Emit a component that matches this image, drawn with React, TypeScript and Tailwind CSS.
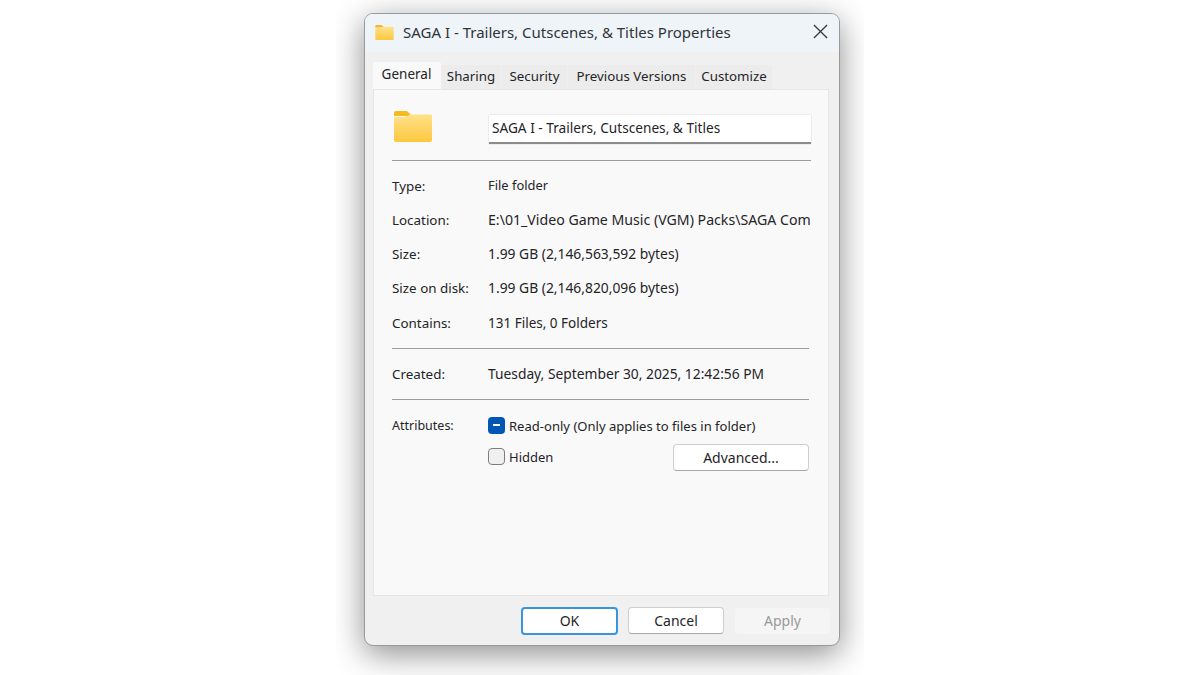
const rows = [
  ['Type:', 'File folder', 'text-[12.900px]'],
  ['Location:', 'E:\\01_Video Game Music (VGM) Packs\\SAGA Complete Soundtrack', 'text-[14.150px]'],
  ['Size:', '1.99 GB (2,146,563,592 bytes)', 'text-[13.850px]'],
  ['Size on disk:', '1.99 GB (2,146,820,096 bytes)', 'text-[13.850px]'],
  ['Contains:', '131 Files, 0 Folders', 'text-[13.500px]'],
];

const tabs = [
  ['Sharing', 'w-[61px]'],
  ['Security', 'w-[66px]'],
  ['Previous Versions', 'w-[128px]'],
  ['Customize', 'w-[77px]'],
];

function FolderIcon({ className }: { className: string }) {
  return (
    <svg className={className} viewBox="0 0 38 31" fill="none">
      <defs>
        <linearGradient id="folderFill" x1="0" y1="0" x2="0" y2="1">
          <stop offset="0" stopColor="#ffe28a" />
          <stop offset="1" stopColor="#fcc83f" />
        </linearGradient>
      </defs>
      <path d="M0 2a2 2 0 0 1 2-2h10a3 3 0 0 1 2 1l4 4H0z" fill="#f8b81f" />
      <path d="M0 7a1 1 0 0 1 1-1h10l5-2.500h20.500a1.500 1.500 0 0 1 1.500 1.500V29a2 2 0 0 1-2 2H2a2 2 0 0 1-2-2z" fill="url(#folderFill)" />
    </svg>
  );
}

export default function App() {
  return (
    <div className="h-[675px] w-[1200px] bg-white font-['Noto_Sans',sans-serif] text-[14px] text-[#1f2428]">
      <div className="mx-auto h-[675px] w-[528px] overflow-hidden pl-[28px] pt-[13px]">
        <div className="flex h-[633px] w-[476px] flex-col overflow-hidden rounded-[9px] border border-[#999999] bg-[#f0f0f0] shadow-[0_8px_32px_rgba(0,0,0,0.45)]">
          {/* Title bar */}
          <div className="flex h-[38px] shrink-0 items-center bg-[#eff4f9] pl-[10px] pr-[11px]">
            <FolderIcon className="-mt-[2px] h-[15px] w-[19px]" />
            <span className="ml-[9px] pb-[2px] text-[15px] text-[#303438]">SAGA I - Trailers, Cutscenes, &amp; Titles Properties</span>
            <svg className="-mt-[3px] ml-auto h-[15px] w-[15px]" viewBox="0 0 16 16" stroke="#3a3a3a" strokeWidth="1.4">
              <path d="M1 1l14 14M15 1L1 15" />
            </svg>
          </div>

          {/* Tabs */}
          <div className="ml-[8px] mt-[10px] flex h-[27px] items-end text-[13.300px]">
            <div className="z-10 flex h-[27px] w-[68px] items-center justify-center rounded-t-[2px] bg-[#f9f9f9] pb-[2px] pr-[1px] text-[13.500px]">General</div>
            {tabs.map(([name, width]) => (
              <div key={name} className={`flex h-[24px] items-center justify-center border-r border-[#f0f0f0] bg-[#ececec] ${width}`}>
                {name}
              </div>
            ))}
          </div>

          {/* General panel */}
          <div className="ml-[8px] h-[507px] w-[456px] border border-[#e6e6e6] bg-[#f9f9f9] pl-[18px] pr-[17px] pt-[20px]">
            <div className="flex h-[36px] items-start">
              <FolderIcon className="ml-[2px] mt-[1px] h-[31px] w-[38px]" />
              <div className="ml-[57px] mt-[5px] flex h-[29px] w-[322px] items-center border-b-2 border-[#8c8c8c] bg-white pb-[1px] pl-[3px] text-[13.650px] shadow-[0_0_1px_rgba(0,0,0,0.3)]">
                SAGA I - Trailers, Cutscenes, &amp; Titles
              </div>
            </div>

            <div className="mt-[14px] h-px bg-[#9c9c9c]" />

            <div className="mt-[8px] flex flex-col">
              {rows.map(([label, value, size]) => (
                <div key={label} className="flex h-[34.300px] items-center pb-[1px]">
                  <span className="w-[96px] shrink-0 text-[13.400px]">{label}</span>
                  <span className={`overflow-hidden whitespace-nowrap ${size}`}>{value}</span>
                </div>
              ))}
            </div>

            <div className="mr-[2px] mt-[8px] h-px bg-[#9c9c9c]" />

            <div className="mt-[8px] flex h-[34px] items-center pb-[1px]">
              <span className="w-[96px] text-[13.400px]">Created:</span>
              <span className="text-[13.800px]">Tuesday, September 30, 2025, 12:42:56 PM</span>
            </div>

            <div className="mr-[2px] mt-[8px] h-px bg-[#9c9c9c]" />

            <div className="mr-[2px] mt-[14px] flex">
              <span className="w-[96px] pt-[1px] text-[12.500px] leading-[22px]">Attributes:</span>
              <div className="flex-1">
                <div className="flex h-[22px] items-center">
                  <div className="flex h-[17px] w-[17px] items-center justify-center rounded-[4px] bg-[#0058b4]">
                    <div className="h-[2px] w-[7px] bg-white" />
                  </div>
                  <span className="ml-[4px] pt-[3px] text-[13.050px]">Read-only (Only applies to files in folder)</span>
                </div>
                <div className="mt-[8px] flex items-center">
                  <div className="-mt-[2px] h-[17px] w-[17px] rounded-[4px] border border-[#7d7d7d] bg-[#f0f0f0]" />
                  <span className="ml-[4px] text-[13px]">Hidden</span>
                  <button className="ml-auto h-[27px] w-[136px] rounded-[4px] border border-[#cfcfcf] border-b-[#a8a8a8] bg-white">Advanced...</button>
                </div>
              </div>
            </div>
          </div>

          {/* Footer buttons */}
          <div className="flex flex-1 items-center justify-end gap-[10px] pr-[9px]">
            <button className="h-[28px] w-[97px] rounded-[4px] border-2 border-[#3a94dc] bg-white">OK</button>
            <button className="mr-px h-[27px] w-[96px] rounded-[4px] border border-[#cfcfcf] border-b-[#a8a8a8] bg-white">Cancel</button>
            <button className="h-[26px] w-[95px] rounded-[4px] bg-[#f5f5f5] text-[#9a9a9a]">Apply</button>
          </div>
        </div>
      </div>
    </div>
  );
}
